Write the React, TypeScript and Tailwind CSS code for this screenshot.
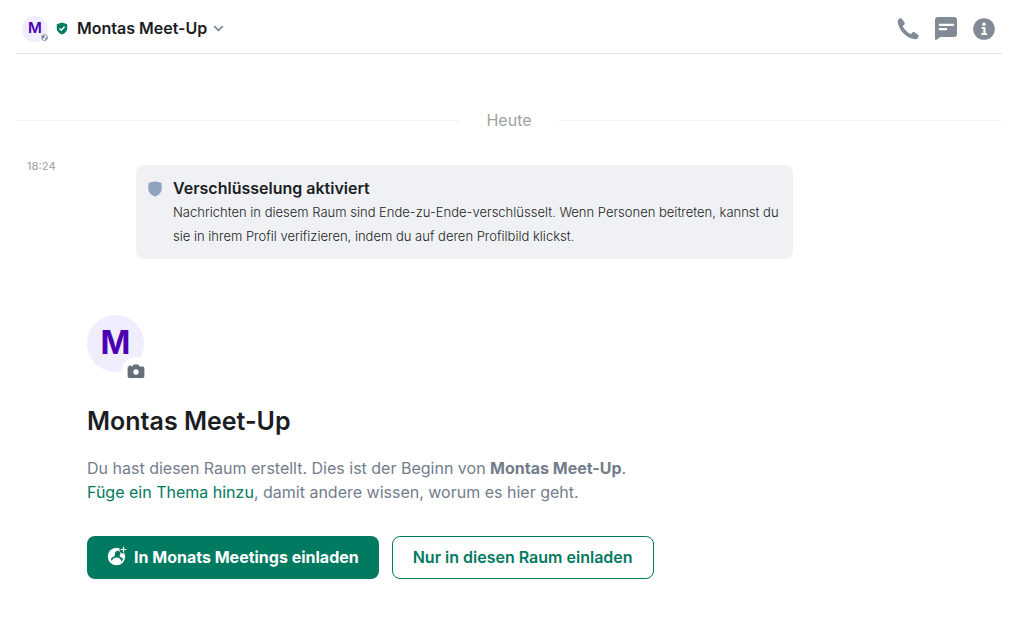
import React from 'react';
import { ChevronDown } from 'lucide-react';

function ShieldCheckIcon() {
    return (
        <svg width="12" height="13" viewBox="0 0 12 13" aria-hidden="true">
            <path d="M6 .6 11.2 2.2V6.5c0 2.7-2.1 4.9-5.2 6-3.1-1.1-5.2-3.3-5.2-6V2.2Z" fill="#007a61" />
            <path d="m3.500 6.500 1.800 1.700 3.300-3.700" fill="none" stroke="#fff" strokeWidth="1.4" />
        </svg>
    );
}

function ShieldIcon() {
    return (
        <svg width="14" height="16" viewBox="0 0 14 16" aria-hidden="true">
            <path d="M7 .5q3.500 0 6.600 1.500v6c0 3.500-2.800 6.300-6.600 7.500C3.200 14.300.4 11.500.4 8V2Q3.500.5 7 .5Z" fill="#91a1c0" />
        </svg>
    );
}

function GlobeIcon() {
    return (
        <svg width="7" height="7" viewBox="0 0 6 6" aria-hidden="true">
            <circle cx="3" cy="3" r="2.6" fill="#fff" stroke="#737d8c" strokeWidth=".7" />
            <path d="M.7 2 2.600 1l.8 1-1 1.600-1 .4ZM3.400 3.400 5.200 2.600 5 4.400 3.800 5Z" fill="#737d8c" />
        </svg>
    );
}

function PhoneIcon() {
    return (
        <svg width="22" height="22" viewBox="0 0 22 22" aria-hidden="true">
            <path
                d="M.6 3.300C.5 2.500.8 2 1.400 1.500L2.500.6c.8-.6 1.900-.5 2.500.3l2.400 3.300c.5.7.4 1.600-.1 2.200L6.100 7.700c-.3.3-.3.7-.1 1 1.700 3 4.200 5.500 7.200 7.200.3.2.7.2 1-.1l1.300-1.300c.6-.5 1.500-.6 2.200-.1l3.300 2.400c.8.6.9 1.700.3 2.500l-.9 1.100c-.5.6-1 .9-1.800.8C10.400 21 1.500 13 .6 3.300Z"
                fill="#818a95"
            />
        </svg>
    );
}

function ThreadsIcon() {
    return (
        <svg width="22" height="23" viewBox="0 0 22 23" aria-hidden="true">
            <path d="M3 0h16a3 3 0 0 1 3 3v14a3 3 0 0 1-3 3H5.500L1.600 22.700C.9 23.200 0 22.800 0 22V3a3 3 0 0 1 3-3Z" fill="#818a95" />
            <path d="M4.800 7.800h13.400M4.800 12.200h6.400" stroke="#fff" strokeWidth="2.2" strokeLinecap="round" />
        </svg>
    );
}

function InfoIcon() {
    return (
        <svg width="22" height="22" viewBox="0 0 22 22" aria-hidden="true">
            <circle cx="11" cy="11" r="10.8" fill="#818a95" />
            <circle cx="11" cy="6.2" r="1.7" fill="#fff" />
            <path d="M9.400 10h2v6M9.200 16h4" fill="none" stroke="#fff" strokeWidth="2.2" strokeLinecap="round" strokeLinejoin="round" />
        </svg>
    );
}

function CameraIcon() {
    return (
        <svg width="18" height="15" viewBox="0 0 18 15" aria-hidden="true">
            <path
                fillRule="evenodd"
                d="M2 2.300V2q0-.6.6-.6h1.200q.6 0 .6.6v.4h1L6.200 1Q6.500.4 7.200.4h3.600q.7 0 1 .6l.8 1.400h3.100q1.700 0 1.700 1.700v8.200q0 1.700-1.700 1.700H2.300Q.6 14 .6 12.300V4.100Q.6 2.500 2 2.300ZM9 5.300a2.700 2.700 0 1 0 0 5.400 2.700 2.700 0 0 0 0-5.400Z"
                fill="#656e79"
            />
        </svg>
    );
}

function InviteIcon() {
    return (
        <svg className="mb-0.5" width="20" height="20" viewBox="0 0 20 20" aria-hidden="true">
            <circle cx="9.5" cy="10.5" r="8.7" fill="#fff" />
            <path d="M3.800 12.500 7.800 9.800C7.400 7 8.500 4.800 10.500 4.700c1.700 0 2.900 1.300 2.900 3 0 1-.4 1.900-1.100 2.500l3.700 2.300c-.4 3-3 4.600-6.200 4.600s-5.600-1.600-6-4.600Z" fill="#007a61" />
            <path d="M4.600 15.200c.8-2.500 2.600-3.800 5-3.800s4.200 1.300 5 3.800c-2.800 2.900-7.200 2.900-10 0Z" fill="#fff" />
            <circle cx="16.5" cy="3.5" r="4" fill="#007a61" />
            <path d="M16.500 1v5M14 3.500h5" stroke="#fff" strokeWidth="1.2" strokeLinecap="round" />
        </svg>
    );
}

function RoomHeader() {
    return (
        <header className="mx-4 flex h-[54px] items-center justify-between border-b border-[#dfe5ef] pr-[7px] pl-1.5">
            <button type="button" className="flex items-center pt-1">
                <span className="relative flex h-[26px] w-[26px] items-center justify-center rounded-full bg-[#f0edff] text-[15px] font-semibold text-[#4a00b2]">
                    M
                    <span className="absolute right-0 bottom-0 flex h-2 w-2 items-center justify-center rounded-full bg-white">
                        <GlobeIcon />
                    </span>
                </span>
                <span className="ml-2">
                    <ShieldCheckIcon />
                </span>
                <span className="ml-[9px] pb-0.5 text-base font-semibold">Montas Meet-Up</span>
                <ChevronDown className="ml-1 text-[#818a95]" size={15} strokeWidth={3} />
            </button>
            <div className="flex items-center gap-4 pt-1">
                <button type="button" aria-label="Anruf">
                    <PhoneIcon />
                </button>
                <button type="button" aria-label="Threads">
                    <ThreadsIcon />
                </button>
                <button type="button" aria-label="Rauminfo">
                    <InfoIcon />
                </button>
            </div>
        </header>
    );
}

export default function App() {
    return (
        <div className="bg-white font-['Inter',sans-serif] text-[#1b1d22]">
            <RoomHeader />

            <main className="px-4 pb-10">
                <div className="mt-[54px] flex items-center gap-[26px]">
                    <hr className="flex-1 border-[#f3f4f6]" />
                    <h2 className="text-base text-[#a2a2a2]">Heute</h2>
                    <hr className="flex-1 border-[#f3f4f6]" />
                </div>

                <div className="mt-[26px] flex items-start">
                    <time className="w-[120px] shrink-0 pl-[11px] text-[11px] leading-4 font-medium text-[#acacac]">18:24</time>
                    <section className="mt-[7px] flex max-w-[657px] items-start gap-[11px] rounded-lg bg-[#f0f1f5] py-[11px] pr-2 pl-3">
                        <span className="pt-[5px]">
                            <ShieldIcon />
                        </span>
                        <div className="flex-1">
                            <h3 className="text-base leading-6 font-semibold">Verschlüsselung aktiviert</h3>
                            <p className="text-[13px] leading-6 font-light">
                                Nachrichten in diesem Raum sind Ende-zu-Ende-verschlüsselt. Wenn Personen beitreten, kannst du sie in ihrem Profil
                                verifizieren, indem du auf deren Profilbild klickst.
                            </p>
                        </div>
                    </section>
                </div>

                <section className="mt-14 pl-[71px]">
                    <div className="relative flex h-[57px] w-[57px] items-center justify-center rounded-full bg-[#f0edff] pb-0.5 text-[32px] font-bold text-[#4a00b2]">
                        M
                        <button
                            type="button"
                            aria-label="Raumbild ändern"
                            className="absolute -right-1.5 -bottom-[13px] flex h-7 w-7 items-center justify-center rounded-full bg-white"
                        >
                            <CameraIcon />
                        </button>
                    </div>

                    <h1 className="mt-[33px] text-[25px] leading-8 font-semibold">Montas Meet-Up</h1>

                    <p className="mt-[19px] text-base text-[#737d8c]">
                        Du hast diesen Raum erstellt. Dies ist der Beginn von <b className="font-bold">Montas Meet-Up</b>.<br />
                        <a href="#thema" className="text-[#007a61]">Füge ein Thema hinzu</a>, damit andere wissen, worum es hier geht.
                    </p>

                    <div className="mt-8 flex flex-wrap gap-[13px]">
                        <button type="button" className="flex h-[43px] items-center gap-[7px] rounded-lg bg-[#007a61] px-5 pb-0.5 text-base font-bold text-white">
                            <InviteIcon />
                            In Monats Meetings einladen
                        </button>
                        <button type="button" className="h-[43px] rounded-lg border border-[#007a61] px-5 pb-0.5 text-base font-semibold text-[#007a61]">
                            Nur in diesen Raum einladen
                        </button>
                    </div>
                </section>
            </main>
        </div>
    );
}
